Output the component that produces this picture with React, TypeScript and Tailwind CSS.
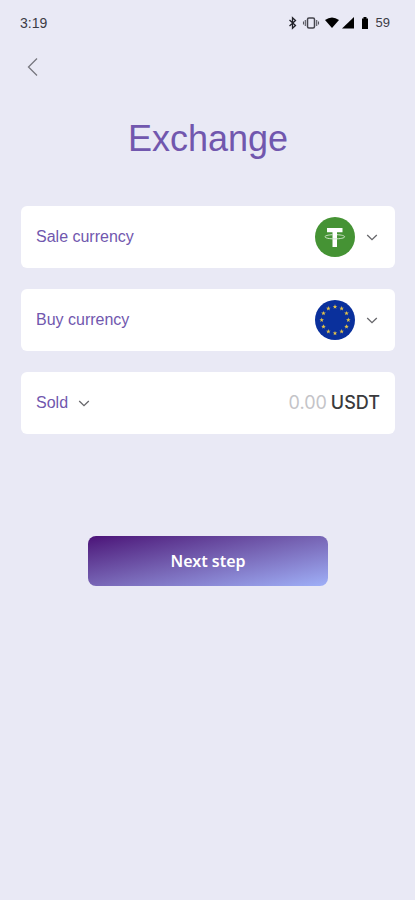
import { useState } from "react";

function Chevron() {
  return (
    <svg className="h-2 w-3" viewBox="0 0 12 8" fill="none" stroke="#66666a" strokeWidth="1.3" aria-hidden="true">
      <path d="M1.200 2 6 6.700 10.800 2" />
    </svg>
  );
}

function TetherIcon() {
  return (
    <svg className="size-10" viewBox="0 0 40 40" aria-hidden="true">
      <circle cx="20" cy="20" r="20" fill="#459334" />
      <path d="M12 11h15.500v4.300h-5.500V30h-4.500V15.300H12z" fill="#fff" />
      <path
        d="M17.500 17.700c-4.500.2-7.500 1-7.500 2.100 0 1.200 4.300 2.100 9.800 2.100s9.800-.9 9.800-2.100c0-1.100-3-1.900-7.600-2.100"
        fill="none"
        stroke="#cfe6ca"
        strokeWidth="1"
      />
    </svg>
  );
}

const STAR = "M0-2.400 .6-.8 2.300-.74.95.3 1.400 1.940 0 1-1.400 1.940-.95.3-2.300-.74-.6-.8z";

function EuroIcon() {
  return (
    <svg className="size-10" viewBox="0 0 40 40" aria-hidden="true">
      <circle cx="20" cy="20" r="20" fill="#0a309c" />
      {Array.from({ length: 12 }, (_, i) => {
        const angle = (i * Math.PI) / 6;
        return (
          <path
            key={i}
            d={STAR}
            fill="#e3c24a"
            transform={`translate(${20 + 13.3 * Math.sin(angle)} ${20 - 13.3 * Math.cos(angle)})`}
          />
        );
      })}
    </svg>
  );
}

const ROW = "flex h-[62px] items-center justify-between rounded-md bg-white px-[15px]";

function CurrencyRow({ id, label, initial }: { id: string; label: string; initial: string }) {
  const [currency, setCurrency] = useState(initial);
  return (
    <div className={ROW}>
      <label htmlFor={id} className="text-base text-[#7157ae]">
        {label}
      </label>
      <div className="relative flex items-center gap-[11px] pr-0.5">
        {currency === "USDT" ? <TetherIcon /> : <EuroIcon />}
        <Chevron />
        <select
          id={id}
          value={currency}
          onChange={(e) => setCurrency(e.target.value)}
          className="absolute inset-0 h-full w-full cursor-pointer opacity-0"
        >
          <option>USDT</option>
          <option>EUR</option>
        </select>
      </div>
    </div>
  );
}

function StatusBar() {
  return (
    <div className="flex h-[46px] items-center justify-between pr-[25px] pl-5 text-sm text-[#3c3c45]">
      <span>3:19</span>
      <div className="flex items-center">
        <svg className="h-3.5 w-[84px]" viewBox="0 0 84 14" aria-hidden="true">
          <path d="M1.500 4 7.500 9.500 4.500 12.300V1.700L7.500 4.500 1.500 10" fill="none" stroke="#222229" strokeWidth="1.300" />
          <rect x="19.500" y="2" width="7" height="10" rx="1.500" fill="none" stroke="#44444c" strokeWidth="1.500" />
          <path d="M17.300 4v6M28.700 4v6M15.500 5.500v3M30.500 5.500v3" stroke="#55555d" strokeWidth="1.100" />
          <path d="M37 4Q44-1 51 4L44 12z" fill="#000" />
          <path d="M54 12.500h12V1z" fill="#000" />
          <path d="M74 2.500h1.500V1h3v1.500H80V13h-6z" fill="#000" />
        </svg>
        <span className="ml-1 text-[13px]">59</span>
      </div>
    </div>
  );
}

export default function App() {
  return (
    <div className="min-h-screen bg-[#e9e9f5] font-['Liberation_Sans',Arial,sans-serif]">
      <StatusBar />
      <header className="flex h-[42px] items-center px-[21px]">
        <button type="button" aria-label="Back" className="flex size-6 items-center justify-center">
          <svg className="h-5 w-3" viewBox="0 0 12 20" fill="none" stroke="#77777f" strokeWidth="1.300" aria-hidden="true">
            <path d="M10 1.500 1.500 10l8.500 8.500" />
          </svg>
        </button>
      </header>
      <main className="pt-7 pr-5 pl-[21px]">
        <h1 className="text-center text-4xl leading-[46px] text-[#7157ae]">Exchange</h1>
        <form className="mt-11" onSubmit={(e) => e.preventDefault()}>
          <div className="flex flex-col gap-[21px]">
            <CurrencyRow id="sale" label="Sale currency" initial="USDT" />
            <CurrencyRow id="buy" label="Buy currency" initial="EUR" />
            <div className={ROW}>
              <div className="flex items-center gap-2.5">
                <select
                  aria-label="Amount type"
                  className="w-8 appearance-none bg-transparent text-base text-[#7157ae] outline-none"
                >
                  <option>Sold</option>
                  <option>Bought</option>
                </select>
                <Chevron />
              </div>
              <div className="flex items-center gap-1 font-['Inter',sans-serif] text-lg">
                <input
                  id="amount"
                  inputMode="decimal"
                  placeholder="0.00"
                  className="w-24 bg-transparent text-right outline-none placeholder:text-[#c4c4c8]"
                />
                <label htmlFor="amount" className="font-medium text-[#3a3a3c]">
                  USDT
                </label>
              </div>
            </div>
          </div>
          <button
            type="submit"
            className="mx-auto mt-[102px] block h-[50px] w-[64%] rounded-lg bg-linear-to-br from-[#4b0f78] via-[#7765b5] to-[#9fb0f8] font-['Noto_Sans',sans-serif] text-base font-semibold text-white"
          >
            Next step
          </button>
        </form>
      </main>
    </div>
  );
}
